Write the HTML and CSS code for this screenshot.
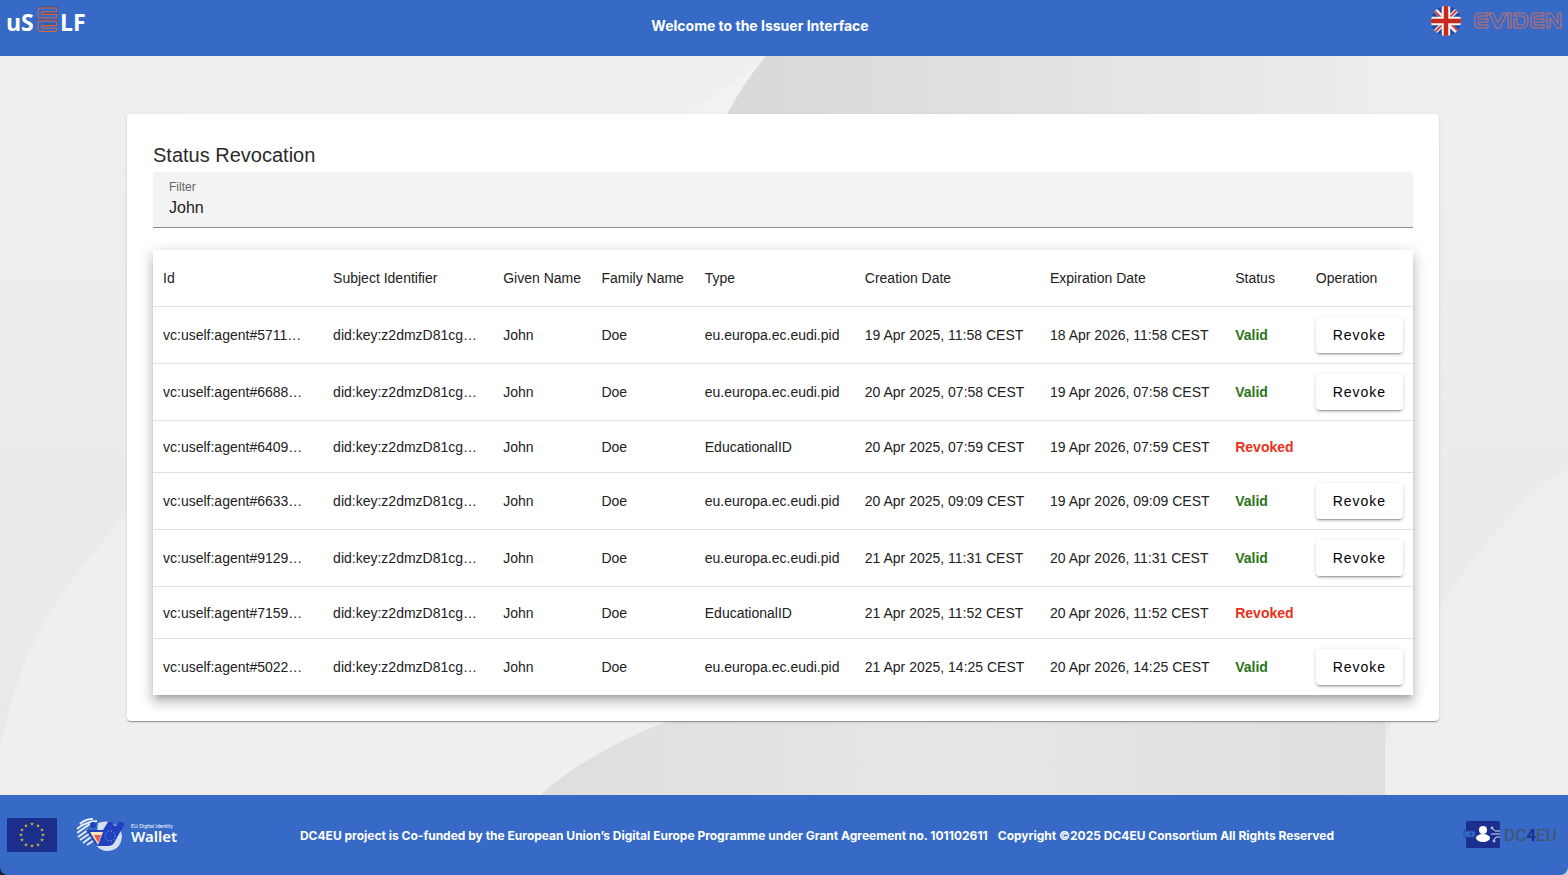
FILE: index.html
```html
<!DOCTYPE html>
<html lang="en">
<head>
<meta charset="utf-8">
<title>Issuer Interface</title>
<link rel="stylesheet" href="styles.css">
</head>
<body>
<header class="topbar">
  <svg class="logo-uself" viewBox="0 0 84 32" role="img" aria-label="uSELF">
    <g class="logo-uself-text"><text x="0" y="26">uS</text><text x="54" y="26">LF</text></g>
    <path class="shade" d="M34 2h17v6H37M33 15h18v4H37"/>
    <path class="outline" d="M50.500 3H34q-2 0-2 2v6q0 2 2 2h16.500V9.500H36V7h14.500zM32 16h18.500v4.500H36V23h14.500v3.500H34q-2 0-2-2z"/>
  </svg>
  <h1 class="topbar-title">Welcome to the Issuer Interface</h1>
  <div class="topbar-end">
    <button class="lang" type="button" aria-label="English">
      <svg viewBox="0 0 60 60">
        <defs><clipPath id="disc"><circle cx="30" cy="30" r="30"/></clipPath></defs>
        <g clip-path="url(#disc)">
          <path fill="#1f4aa5" d="M0 0h60v60H0z"/>
          <path stroke="#f4f4f4" stroke-width="9" d="M4 4l52 52M56 4L4 56"/>
          <path stroke="#d0443f" stroke-width="4" d="M4 7l22 22M34 30l22 22M56 4L34 26M26 34L4 56"/>
          <path stroke="#f4f4f4" stroke-width="17" d="M30 0v60M0 30h60"/>
          <path stroke="#c8281e" stroke-width="9" d="M30 0v60M0 30h60"/>
        </g>
      </svg>
    </button>
    <svg class="logo-eviden" viewBox="0 0 88 18" role="img" aria-label="EVIDEN">
      <path d="M14 1H4Q1 1 1 4v9q0 3 3 3h10v-3H5q-1 0-1-1v-2h10V7H4V5q0-1 1-1h9zM15 1h4l5 10 5-10h4l-7 15h-4zM34 1h3v15h-3zM40 1h8q6 0 6 6v3q0 6-6 6h-8V7h3v6h5q3 0 3-3V7q0-3-3-3h-8zM70 1H60q-3 0-3 3v9q0 3 3 3h10v-3h-9q-1 0-1-1v-2h10V7H60V5q0-1 1-1h9zM73 16V1h4l7 10V1h3v15h-4L76 6v10z"/>
    </svg>
  </div>
</header>

<main class="stage">
  <svg class="backdrop" viewBox="0 0 1568 739" preserveAspectRatio="none" aria-hidden="true">
    <defs>
      <linearGradient id="fold-top" x1="0" y1="0" x2="1" y2="0"><stop offset="0" stop-color="#dad8d9"/><stop offset=".5" stop-color="#e2e2e2"/><stop offset=".85" stop-color="#eaeaea"/><stop offset="1" stop-color="#efedee"/></linearGradient>
      <linearGradient id="fold-bottom" x1="0" y1="0" x2="1" y2="0"><stop offset="0" stop-color="#dedede"/><stop offset=".5" stop-color="#e6e6e6"/><stop offset="1" stop-color="#e0dddf"/></linearGradient>
      <linearGradient id="side" x1="0" y1="0" x2="0" y2="1"><stop offset="0" stop-color="#efefef"/><stop offset="1" stop-color="#e9e9e9"/></linearGradient>
      <linearGradient id="sheet" x1="0" y1="0" x2="1" y2="0"><stop offset="0" stop-color="#efefef"/><stop offset="1" stop-color="#f2eeef"/></linearGradient>
      <path id="curve" d="M0 0h183v414Q150 430 126 459 80 510 52 554 20 600 0 690z"/>
    </defs>
    <path fill="url(#sheet)" d="M0 0h1568v739H0z"/>
    <use href="#curve" fill="url(#side)"/>
    <path fill="#efefef" d="M183 0h583L670 90H183z"/>
    <path fill="#f4f1f2" d="M766 0q-36 30-80 58h44z"/>
    <path fill="url(#fold-top)" d="M766 0q-22 26-39 58v300h658V0z"/>
    <path fill="url(#fold-bottom)" d="M727 358v250l-59 57q-78 30-128 74h845V358z"/>
    <path fill="#efeeef" d="M1385 0h183v739h-183z"/>
    <use href="#curve" x="1385" fill="url(#side)"/>
  </svg>
  <section class="card">
    <h2 class="card-title">Status Revocation</h2>
    <div class="field">
      <label for="filter">Filter</label>
      <input id="filter" type="text" value="John">
    </div>
    <table class="grid">
      <colgroup><col class="c-id"><col class="c-id"><col class="c-given"><col class="c-family"><col class="c-type"><col class="c-date"><col class="c-date"><col class="c-status"><col class="c-op"></colgroup>
      <thead>
        <tr><th>Id</th><th>Subject Identifier</th><th>Given Name</th><th>Family Name</th><th>Type</th><th>Creation Date</th><th>Expiration Date</th><th>Status</th><th>Operation</th></tr>
      </thead>
      <tbody>
        <tr><td>vc:uself:agent#5711…</td><td>did:key:z2dmzD81cg…</td><td>John</td><td>Doe</td><td>eu.europa.ec.eudi.pid</td><td>19 Apr 2025, 11:58 CEST</td><td>18 Apr 2026, 11:58 CEST</td><td class="valid">Valid</td><td><button class="revoke" type="button">Revoke</button></td></tr>
        <tr><td>vc:uself:agent#6688…</td><td>did:key:z2dmzD81cg…</td><td>John</td><td>Doe</td><td>eu.europa.ec.eudi.pid</td><td>20 Apr 2025, 07:58 CEST</td><td>19 Apr 2026, 07:58 CEST</td><td class="valid">Valid</td><td><button class="revoke" type="button">Revoke</button></td></tr>
        <tr class="short"><td>vc:uself:agent#6409…</td><td>did:key:z2dmzD81cg…</td><td>John</td><td>Doe</td><td>EducationalID</td><td>20 Apr 2025, 07:59 CEST</td><td>19 Apr 2026, 07:59 CEST</td><td class="revoked">Revoked</td><td></td></tr>
        <tr><td>vc:uself:agent#6633…</td><td>did:key:z2dmzD81cg…</td><td>John</td><td>Doe</td><td>eu.europa.ec.eudi.pid</td><td>20 Apr 2025, 09:09 CEST</td><td>19 Apr 2026, 09:09 CEST</td><td class="valid">Valid</td><td><button class="revoke" type="button">Revoke</button></td></tr>
        <tr><td>vc:uself:agent#9129…</td><td>did:key:z2dmzD81cg…</td><td>John</td><td>Doe</td><td>eu.europa.ec.eudi.pid</td><td>21 Apr 2025, 11:31 CEST</td><td>20 Apr 2026, 11:31 CEST</td><td class="valid">Valid</td><td><button class="revoke" type="button">Revoke</button></td></tr>
        <tr class="short"><td>vc:uself:agent#7159…</td><td>did:key:z2dmzD81cg…</td><td>John</td><td>Doe</td><td>EducationalID</td><td>21 Apr 2025, 11:52 CEST</td><td>20 Apr 2026, 11:52 CEST</td><td class="revoked">Revoked</td><td></td></tr>
        <tr><td>vc:uself:agent#5022…</td><td>did:key:z2dmzD81cg…</td><td>John</td><td>Doe</td><td>eu.europa.ec.eudi.pid</td><td>21 Apr 2025, 14:25 CEST</td><td>20 Apr 2026, 14:25 CEST</td><td class="valid">Valid</td><td><button class="revoke" type="button">Revoke</button></td></tr>
      </tbody>
    </table>
  </section>
</main>

<footer class="bottombar">
  <div class="partners">
    <svg class="flag-eu" viewBox="0 0 50 34" role="img" aria-label="European Union">
      <defs><path id="star" d="M0-2l.5 1.300h1.400L.8.2l.4 1.400L0 .8l-1.200.8.4-1.400L-1.900-.7h1.400z"/></defs>
      <path fill="#1c2e8c" d="M0 0h50v34H0z"/>
      <g fill="#d0bc2c"><use href="#star" x="25" y="6"/><use href="#star" x="31" y="8"/><use href="#star" x="35" y="12"/><use href="#star" x="36" y="17"/><use href="#star" x="35" y="22"/><use href="#star" x="31" y="27"/><use href="#star" x="25" y="28"/><use href="#star" x="19" y="27"/><use href="#star" x="15" y="22"/><use href="#star" x="14" y="17"/><use href="#star" x="15" y="12"/><use href="#star" x="19" y="8"/></g>
    </svg>
    <svg class="logo-wallet" viewBox="0 0 106 36" role="img" aria-label="EU Digital Identity Wallet">
      <path fill="#d5dfef" d="M21 6q8-3 14 0 9 4 10 13-1 14-14 15-8 0-12-6z"/>
      <path fill="none" stroke="#e4ebf7" stroke-width="2" d="M3 7q5-5 13-5M0 12Q8 5 20 4M0 16l13-9M1 20l10-7M3 23l9-6M6 26l8-6M10 28l6-4"/>
      <path fill="#2140bf" d="M9 13h17l5-8h5q0 4 3 4t2-4h5l1 3-10 18q-2 3-6 3H20z"/>
      <circle cx="16" cy="8" r="3" fill="#2140bf"/>
      <path fill="#f7e6bd" d="M13 15h13l-5 13z"/><path fill="#ee5b4c" d="M17 18h7l-3 8z"/>
      <circle cx="33" cy="19" r="5" fill="none" stroke="#9ec6ed" stroke-dasharray="1 2"/>
      <text class="wallet-small" x="54" y="11">EU Digital Identity</text>
      <text class="wallet-big" x="54" y="25">Wallet</text>
    </svg>
  </div>
  <p class="legal"><span>DC4EU project is Co-funded by the European Union’s Digital Europe Programme under Grant Agreement no. 101102611</span><span>Copyright ©2025 DC4EU Consortium All Rights Reserved</span></p>
  <svg class="logo-dc4eu" viewBox="0 0 92 30" role="img" aria-label="DC4EU">
    <rect x="3" y="1" width="34" height="27" rx="2" fill="#1a2f8e"/>
    <path fill="#366ac6" stroke="#1b4aa5" d="M1 11h10q1 0 1 1v4q0 1-1 1H1z"/>
    <circle cx="8" cy="14" r="1" fill="none" stroke="#1a2f8e"/>
    <circle cx="20" cy="10" r="4" fill="#fff"/><ellipse cx="20" cy="18" rx="7" ry="4" fill="#fff"/>
    <g fill="none" stroke="#dbe2f5"><circle cx="29" cy="8" r="1"/><path d="M30 9l2 2h5M28 14h9M37 17h-4l-2 3"/><circle cx="31" cy="21" r="1"/></g>
    <text class="dc4eu-text" x="41" y="21">DC<tspan class="dc4eu-four">4</tspan>EU</text>
  </svg>
</footer>
</body>
</html>
```
FILE: styles.css
```css
* { box-sizing: border-box; }
html { height: 100%; }
body {
  margin: 0;
  min-height: 100%;
  display: flex;
  flex-direction: column;
  font-family: "Liberation Sans", Arial, sans-serif;
  color: #212121;
  background: linear-gradient(90deg, #1c2233 50%, #c9cbd0 50%);
}
button, input { font-family: inherit; color: inherit; }

.topbar {
  height: 56px;
  padding: 5px 6px;
  display: flex;
  justify-content: space-between;
  align-items: flex-start;
  background: #366ac6;
  color: #fff;
}
.logo-uself { width: 84px; height: 32px; overflow: visible; }
.logo-uself-text { font: 700 23px "Open Sans", sans-serif; fill: #fff; }
.outline { fill: none; stroke: #e2632f; }
.shade { fill: none; stroke: #3a4870; }
.topbar-title { margin: 0; font: 700 14px/42px Inter, sans-serif; }
.topbar-end { display: flex; gap: 12px; align-items: center; }
.lang { width: 32px; height: 32px; padding: 1px; border: 0; background: none; }
.lang svg { display: block; width: 30px; height: 30px; }
.logo-eviden { width: 88px; height: 18px; fill: none; stroke: #d9705a; }

.stage { position: relative; flex: 1; padding: 58px 129px 74px 127px; background: #efeeef; }
.backdrop { position: absolute; inset: 0; width: 100%; height: 100%; }
.card {
  position: relative;
  padding: 26px;
  border-radius: 4px;
  background: #fff;
  box-shadow: 0 2px 1px -1px rgba(0,0,0,.2), 0 1px 1px rgba(0,0,0,.14), 0 1px 3px rgba(0,0,0,.12);
}
.card-title { margin: 0; padding-bottom: 2px; font-size: 20px; font-weight: 400; line-height: 30px; color: #2b2b2b; }
.field {
  height: 56px;
  padding: 8px 16px;
  border-bottom: 1px solid #8a8a8a;
  border-radius: 4px 4px 0 0;
  background: #f3f3f3;
}
.field label { display: block; font-size: 12px; line-height: 14px; color: #666; }
.field input { display: block; width: 100%; height: 28px; padding: 0; border: 0; outline: 0; background: none; font-size: 16px; }

.grid {
  width: 100%;
  margin-top: 22px;
  table-layout: fixed;
  border-collapse: separate;
  border-spacing: 0;
  background: #fff;
  box-shadow: 0 5px 5px -3px rgba(0,0,0,.2), 0 8px 10px 1px rgba(0,0,0,.14), 0 3px 14px 2px rgba(0,0,0,.12);
}
.c-id { width: 13.5%; }
.c-given { width: 7.8%; }
.c-family { width: 8.2%; }
.c-type { width: 12.7%; }
.c-date { width: 14.7%; }
.c-status { width: 6.4%; }
.c-op { width: 8.5%; }
.grid th, .grid td {
  height: 57px;
  padding: 0 10px;
  border-bottom: 1px solid #e0e0e0;
  font-size: 14px;
  font-weight: 400;
  line-height: 20px;
  text-align: left;
  white-space: nowrap;
}
.grid .short td { height: 52px; }
.grid tr:last-child td { height: 56px; border-bottom: 0; }
.grid .valid { color: #2b7518; font-weight: 700; }
.grid .revoked { color: #e8301a; font-weight: 700; }
.revoke {
  display: block;
  width: 100%;
  height: 36px;
  padding: 0;
  border: 0;
  border-radius: 4px;
  background: #fff;
  color: #000;
  font-size: 14px;
  letter-spacing: 1px;
  box-shadow: 0 3px 1px -2px rgba(0,0,0,.2), 0 2px 2px rgba(0,0,0,.14), 0 1px 5px rgba(0,0,0,.12);
}

.bottombar {
  height: 80px;
  padding: 0 13px 0 7px;
  display: flex;
  justify-content: space-between;
  align-items: center;
  border-radius: 0 0 8px 8px;
  background: #366ac6;
  color: #fff;
}
.partners { display: flex; gap: 20px; align-items: center; }
.flag-eu { width: 50px; height: 34px; }
.logo-wallet { width: 106px; height: 36px; }
.wallet-small { font: 400 5px Inter, sans-serif; fill: #fff; }
.wallet-big { font: 600 15px "Noto Sans", sans-serif; fill: #fff; }
.legal { margin: 0 12px 0 0; padding-top: 2px; display: flex; gap: 10px; font: 700 12px/16px Inter, sans-serif; }
.logo-dc4eu { width: 92px; height: 30px; overflow: visible; }
.dc4eu-text { font: 400 17px Roboto, sans-serif; fill: #4a5060; }
.dc4eu-four { font-weight: 700; fill: #1a2f8e; }
```
